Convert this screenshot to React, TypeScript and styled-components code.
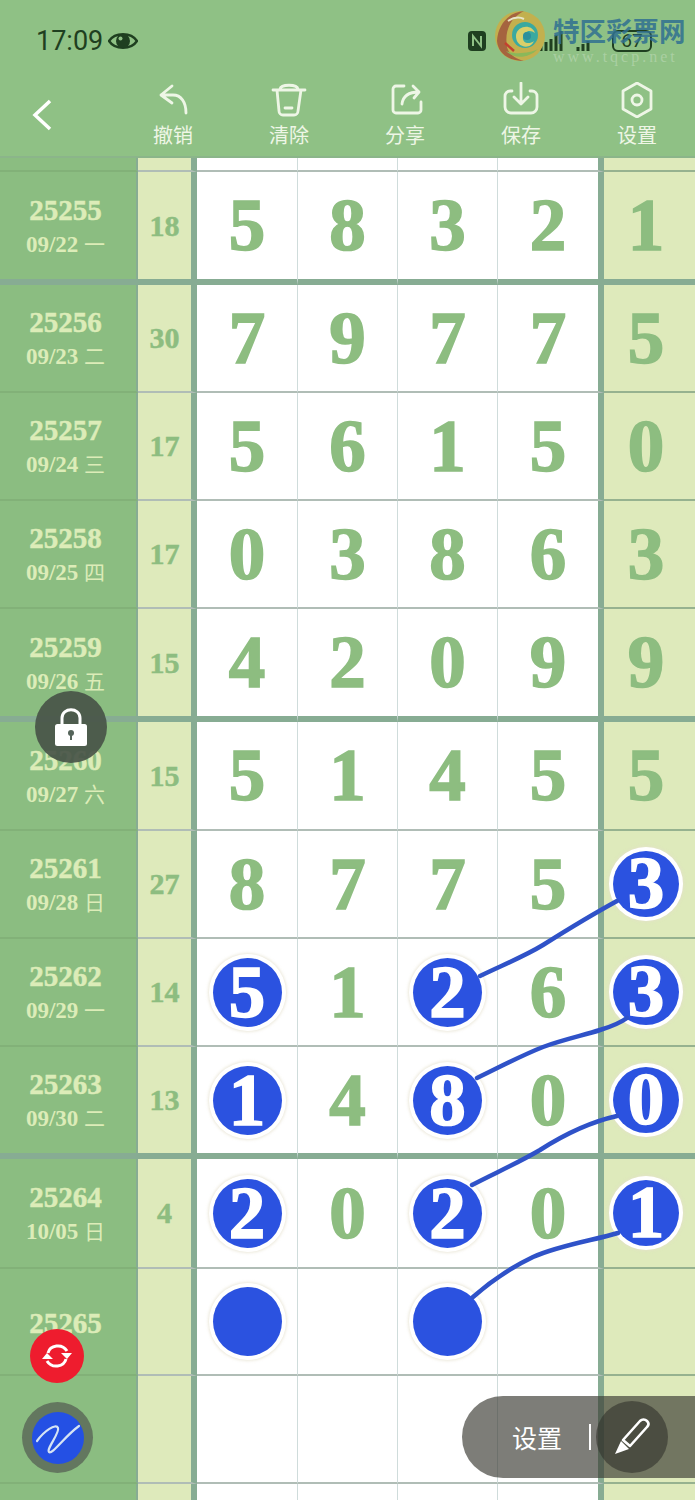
import React from 'react'
import styled, { createGlobalStyle } from 'styled-components'

interface IRow {
  issue?: string;
  date?: string;
  week?: string;
  sum?: string;
  nums: string[];
  balls?: number[];
  height: number;
  thick?: boolean;
}

const ROWS: IRow[] = [
  { nums: ['', '', '', '', ''], height: 14 },
  { issue: '25255', date: '09/22', week: '一', sum: '18', nums: ['5', '8', '3', '2', '1'], height: 113, thick: true },
  { issue: '25256', date: '09/23', week: '二', sum: '30', nums: ['7', '9', '7', '7', '5'], height: 108 },
  { issue: '25257', date: '09/24', week: '三', sum: '17', nums: ['5', '6', '1', '5', '0'], height: 108 },
  { issue: '25258', date: '09/25', week: '四', sum: '17', nums: ['0', '3', '8', '6', '3'], height: 108 },
  { issue: '25259', date: '09/26', week: '五', sum: '15', nums: ['4', '2', '0', '9', '9'], height: 113, thick: true },
  { issue: '25260', date: '09/27', week: '六', sum: '15', nums: ['5', '1', '4', '5', '5'], height: 109 },
  { issue: '25261', date: '09/28', week: '日', sum: '27', nums: ['8', '7', '7', '5', '3'], balls: [4], height: 108 },
  { issue: '25262', date: '09/29', week: '一', sum: '14', nums: ['5', '1', '2', '6', '3'], balls: [0, 2, 4], height: 108 },
  { issue: '25263', date: '09/30', week: '二', sum: '13', nums: ['1', '4', '8', '0', '0'], balls: [0, 2, 4], height: 112, thick: true },
  { issue: '25264', date: '10/05', week: '日', sum: '4', nums: ['2', '0', '2', '0', '1'], balls: [0, 2, 4], height: 110 },
  { issue: '25265', nums: ['', '', '', '', ''], balls: [0, 2], height: 107 },
  { nums: ['', '', '', '', ''], height: 108 },
  { nums: ['', '', '', '', ''], height: 20 },
];

const LINKS = [
  'M480 976 C505 964 525 956 543 945 C570 928 595 913 617 901',
  'M477 1078 C498 1068 520 1056 543 1047 C565 1039 585 1035 600 1030 C610 1027 620 1023 627 1018',
  'M472 1185 C495 1173 518 1163 540 1150 C565 1134 590 1122 617 1116',
  'M473 1297 C490 1282 510 1268 533 1257 C560 1245 595 1240 618 1233',
];

const TOOLS = [
  {
    label: '撤销',
    icon: <path d="M17 4 L6 13 L17 21 M6 13 H18 C26 13 31 20 31 31" />,
  },
  {
    label: '清除',
    icon: <path d="M2 8 H34 M6 8 L8 29 a4 4 0 0 0 4 4 h11 a4 4 0 0 0 4 -4 L30 8 M9 7 C10 2 26 2 27 7 M14 26 H21" />,
  },
  {
    label: '分享',
    icon: <path d="M17 4 H9 a3 3 0 0 0 -3 3 V28 a3 3 0 0 0 3 3 H31 a3 3 0 0 0 3 -3 V20 M15 22 C16 14 22 10 32 10 M26 4 L32 10 L27 16" />,
  },
  {
    label: '保存',
    icon: <path d="M18 1 V22 M11 15 L18 22 L25 15 M9 9 H7 a5 5 0 0 0 -5 5 V25 a6 6 0 0 0 6 6 H28 a6 6 0 0 0 6 -6 V14 a5 5 0 0 0 -5 -5 H27" />,
  },
  {
    label: '设置',
    icon: (
      <>
        <path d="M18 1 L32 9 V27 L18 35 L4 27 V9 Z" />
        <circle cx="18" cy="18" r="5" />
      </>
    ),
  },
];

function App() {
  return (
    <>
      <GlobalStyle />
      <Page>
        <Header>
          <StatusBar>
            <Clock>17:09</Clock>
            <svg width="30" height="22" viewBox="0 0 30 22">
              <path d="M1 11 C7 2 23 2 29 11 C23 20 7 20 1 11 Z" fill="none" stroke="#1f3f20" strokeWidth="2.4" />
              <circle cx="15" cy="11" r="7" fill="#1f3f20" />
              <circle cx="12.5" cy="8.5" r="2" fill="#8fc185" />
            </svg>
            <StatusRight>
              <svg width="20" height="22" viewBox="0 0 20 22">
                <rect x="1" y="1" width="18" height="20" rx="4" fill="#1f3f20" />
                <path d="M6 16 V6 L14 16 V6" fill="none" stroke="#8fc185" strokeWidth="2" />
              </svg>
              <Signal $left={53} viewBox="0 0 24 22" width="24" height="22">
                <path d="M1 16 V21 M6 12 V21 M11 9 V21 M16 5 V21 M21 1 V21" stroke="#1f3f20" strokeWidth="3" />
              </Signal>
              <Signal $left={12} viewBox="0 0 14 22" width="14" height="22">
                <path d="M2 17 V21 M7 14 V21 M12 11 V21" stroke="#1f3f20" strokeWidth="3" />
              </Signal>
              <Battery>67</Battery>
            </StatusRight>
          </StatusBar>
          <Toolbar>
            <BackButton>
              <svg width="20" height="32" viewBox="0 0 20 32">
                <path d="M18 2 L3 16 L18 30" />
              </svg>
            </BackButton>
            {TOOLS.map((tool) => (
              <ToolButton key={tool.label}>
                <svg width="36" height="36" viewBox="0 0 36 36">{tool.icon}</svg>
                <span>{tool.label}</span>
              </ToolButton>
            ))}
          </Toolbar>
        </Header>

        <Watermark>
          <svg width="52" height="54" viewBox="0 0 52 54">
            <circle cx="26" cy="27" r="25" fill="#c2b04e" />
            <path d="M3 32 C4 14 16 3 30 2 C18 8 10 20 13 38 C15 46 22 50 30 52 C14 52 4 44 3 32 Z" fill="#a5643f" />
            <path d="M12 42 C20 50 34 50 44 40 C36 44 22 46 12 42 Z" fill="#8ab85a" />
            <circle cx="31" cy="26" r="13" fill="#3aa9a0" />
            <path d="M22 26 C24 16 38 15 41 24 C36 20 30 22 29 28 C28 34 35 36 40 32 C36 42 21 38 22 26 Z" fill="#d8cf6a" />
            <circle cx="33" cy="27" r="4" fill="#2d8f9c" />
            <path d="M14 12 C20 8 26 8 30 10" fill="none" stroke="#e8e6c8" strokeWidth="2" />
            <path d="M11 34 L20 42" stroke="#c3402f" strokeWidth="2.5" />
          </svg>
          <WatermarkText>
            <strong>特区彩票网</strong>
            <small>www.tqcp.net</small>
          </WatermarkText>
        </Watermark>

        <Board>
          {ROWS.map((row, i) => (
            <Row key={i} $height={row.height}>
              <InfoCell $thick={row.thick}>
                {row.issue && <Issue>{row.issue}</Issue>}
                {row.date && (
                  <DateText>
                    {row.date} <Week>{row.week}</Week>
                  </DateText>
                )}
              </InfoCell>
              <SumCell $thick={row.thick}>{row.sum}</SumCell>
              {row.nums.map((num, col) => {
                const hasBall = row.balls?.includes(col);
                const Cell = col === 4 ? LastCell : col === 3 ? EdgeCell : NumCell;
                return (
                  <Cell key={col} $thick={row.thick}>
                    {hasBall ? <Ball $small={col === 4}>{num}</Ball> : num}
                  </Cell>
                );
              })}
            </Row>
          ))}
        </Board>

        <Links viewBox="0 0 695 1500" width="695" height="1500">
          {LINKS.map((d) => (
            <path key={d} d={d} />
          ))}
        </Links>

        <LockButton>
          <svg width="34" height="40" viewBox="0 0 34 40">
            <path d="M8 18 V11 C8 0 26 0 26 11 V18" fill="none" stroke="#fff" strokeWidth="3" />
            <rect x="1" y="17" width="32" height="22" rx="2.5" fill="#fff" />
            <circle cx="17" cy="26" r="3" fill="#55645a" />
            <rect x="16" y="26" width="2" height="7" fill="#55645a" />
          </svg>
        </LockButton>

        <RefreshButton>
          <svg width="30" height="28" viewBox="0 0 30 28">
            <path d="M6 11 C8 3 20 1 25 9 M24 17 C22 25 10 27 5 19" fill="none" stroke="#fff" strokeWidth="3" />
            <path d="M19 11 H30 L25 17 Z M0 17 H11 L5 11 Z" fill="#fff" />
          </svg>
        </RefreshButton>

        <BrushButton>
          <BrushInner>
            <svg width="46" height="36" viewBox="0 0 46 36">
              <path d="M2 21 C9 11 21 3 23 8 C25 13 11 29 14 32 C17 35 30 16 44 6" fill="none" stroke="#d6e4f4" strokeWidth="2.2" strokeLinecap="round" />
            </svg>
          </BrushInner>
        </BrushButton>

        <SettingPill>
          <PillLabel>设置</PillLabel>
          <PillDivider />
          <PenButton>
            <svg width="40" height="40" viewBox="0 0 40 40">
              <path d="M11 23 L28 4 C30 2 33 2 35 4 C37 6 37 8 35 10 L18 29 Z" fill="none" stroke="#fff" strokeWidth="2.6" strokeLinejoin="round" />
              <path d="M9 24 L17 32 L3 37 Z" fill="#fff" />
            </svg>
          </PenButton>
        </SettingPill>
      </Page>
    </>
  )
}

const GlobalStyle = createGlobalStyle`
  html, body {
    margin: 0;
    padding: 0;
    background: #fff;
  }

  * {
    box-sizing: border-box;
  }
`;

const Page = styled.div`
  position: relative;
  width: 695px;
  height: 1500px;
  overflow: hidden;
  font-family: "Liberation Serif", "Noto Sans CJK SC", serif;
`;

const Header = styled.header`
  height: 158px;
  background: #8fc185;
  border-bottom: 2px solid #8bb58a;
`;

const StatusBar = styled.div`
  height: 82px;
  padding: 0 43px 0 36px;
  display: flex;
  align-items: center;
  gap: 5px;
  color: #1f3f20;
`;

const Clock = styled.span`
  font-family: Roboto, "Liberation Sans", sans-serif;
  font-size: 27px;
`;

const StatusRight = styled.div`
  margin-left: auto;
  display: flex;
  align-items: center;
`;

const Signal = styled.svg<{ $left: number }>`
  margin-left: ${({ $left }) => $left}px;
`;

const Battery = styled.div`
  margin-left: 22px;
  width: 40px;
  height: 22px;
  border: 2px solid #1f3f20;
  border-radius: 6px;
  font-family: Roboto, "Liberation Sans", sans-serif;
  font-size: 19px;
  line-height: 18px;
  text-align: center;
  color: #1f3f20;
`;

const Toolbar = styled.div`
  display: grid;
  grid-template-columns: 115px repeat(5, 116px);
`;

const BackButton = styled.div`
  padding: 17px 0 0 32px;

  svg {
    display: block;
  }

  path {
    fill: none;
    stroke: #fff;
    stroke-width: 3.5;
  }
`;

const ToolButton = styled.div`
  display: flex;
  flex-direction: column;
  align-items: center;
  gap: 3px;

  svg {
    display: block;
    fill: none;
    stroke: #eef6e6;
    stroke-width: 2.8;
    stroke-linejoin: round;
    stroke-linecap: round;
  }

  span {
    font-family: "Noto Sans CJK SC", sans-serif;
    font-size: 20px;
    line-height: 28px;
    color: #eef6e6;
  }
`;

const Watermark = styled.div`
  position: absolute;
  top: 9px;
  left: 494px;
  display: flex;
  gap: 7px;
`;

const WatermarkText = styled.div`
  display: flex;
  flex-direction: column;
  padding-top: 2px;

  strong {
    font-family: "Noto Sans CJK SC", sans-serif;
    font-size: 26.5px;
    line-height: 38px;
    font-weight: 700;
    color: rgba(48, 112, 145, 0.85);
    white-space: nowrap;
  }

  small {
    font-family: "Liberation Serif", serif;
    font-size: 16px;
    line-height: 16px;
    letter-spacing: 3px;
    color: rgba(255, 255, 255, 0.25);
    white-space: nowrap;
  }
`;

const Board = styled.div`
  display: flex;
  flex-direction: column;
`;

const Row = styled.div<{ $height: number }>`
  display: grid;
  grid-template-columns: 138px 59px 101px 100px 100px 106px 91px;
  height: ${({ $height }) => $height}px;
  flex: none;
`;

const THICK = '#87ac93';

const CellBase = styled.div<{ $thick?: boolean }>`
  display: flex;
  align-items: center;
  justify-content: center;
  min-height: 0;
  border-bottom: ${({ $thick }) => ($thick ? 6 : 2)}px solid ${({ $thick }) => ($thick ? THICK : '#b0bdb6')};
  font-weight: 700;
`;

const InfoCell = styled(CellBase)`
  flex-direction: column;
  padding: 2px 5px 0 0;
  gap: 6px;
  background: #8bbd81;
  color: #dcecb8;
  border-right: 2px solid #87ac93;
  border-bottom-color: ${({ $thick }) => ($thick ? THICK : '#82b178')};
`;

const Issue = styled.div`
  font-size: 29px;
  line-height: 30px;
  -webkit-text-stroke: 0.5px #dcecb8;
`;

const DateText = styled.div`
  font-size: 23px;
  line-height: 28px;
  white-space: nowrap;
`;

const Week = styled.span`
  font-weight: 400;
  font-size: 21px;
`;

const SumCell = styled(CellBase)`
  background: #deeabb;
  color: #8dbd80;
  font-size: 30px;
  -webkit-text-stroke: 0.5px #8dbd80;
  border-right: 6px solid #87ac93;
`;

const NumCell = styled(CellBase)`
  background: #fff;
  color: #8dbd80;
  font-size: 73px;
  line-height: 1;
  -webkit-text-stroke: 1.6px #8dbd80;
  border-right: 1px solid #cfdcdb;
`;

const EdgeCell = styled(NumCell)`
  border-right: 6px solid #87ac93;
`;

const LastCell = styled(NumCell)`
  background: #deeabb;
  padding-right: 7px;
  border-right: 0;
  border-bottom-color: ${({ $thick }) => ($thick ? THICK : '#96b28f')};
`;

const Ball = styled.div<{ $small?: boolean }>`
  flex: none;
  width: ${({ $small }) => ($small ? 66 : 69)}px;
  height: ${({ $small }) => ($small ? 66 : 69)}px;
  border-radius: 50%;
  background: #2b52e0;
  box-shadow: 0 0 0 4px #fff, 0 0 3px 5px rgba(228, 224, 204, 0.7);
  color: #fff;
  -webkit-text-stroke: 1.6px #fff;
  line-height: ${({ $small }) => ($small ? 66 : 69)}px;
  text-align: center;
  position: relative;
`;

const Links = styled.svg`
  position: absolute;
  top: 0;
  left: 0;
  pointer-events: none;

  path {
    fill: none;
    stroke: #2f52c8;
    stroke-width: 4.5;
    stroke-linecap: round;
  }
`;

const RoundButton = styled.div`
  position: absolute;
  z-index: 3;
  display: flex;
  align-items: center;
  justify-content: center;
  border-radius: 50%;
`;

const LockButton = styled(RoundButton)`
  top: 691px;
  left: 35px;
  width: 72px;
  height: 72px;
  background: rgba(72, 84, 72, 0.92);
`;

const RefreshButton = styled(RoundButton)`
  top: 1329px;
  left: 30px;
  width: 54px;
  height: 54px;
  background: #ee1c2e;
`;

const BrushButton = styled(RoundButton)`
  top: 1402px;
  left: 22px;
  width: 71px;
  height: 71px;
  background: #63775f;
`;

const BrushInner = styled.div`
  width: 52px;
  height: 52px;
  border-radius: 50%;
  background: #2450e4;
  display: flex;
  align-items: center;
  justify-content: center;
`;

const SettingPill = styled.div`
  position: absolute;
  z-index: 3;
  top: 1396px;
  left: 462px;
  width: 233px;
  height: 82px;
  padding-left: 50px;
  border-radius: 41px 0 0 41px;
  background: rgba(58, 58, 50, 0.66);
  display: flex;
  align-items: center;
`;

const PillLabel = styled.span`
  font-family: "Noto Sans CJK SC", sans-serif;
  font-size: 25px;
  color: #fff;
`;

const PillDivider = styled.span`
  width: 2px;
  height: 26px;
  margin-left: 27px;
  background: #fff;
`;

const PenButton = styled.div`
  margin-left: 5px;
  width: 72px;
  height: 72px;
  border-radius: 50%;
  background: rgba(50, 50, 44, 0.6);
  display: flex;
  align-items: center;
  justify-content: center;
`;

export default App
